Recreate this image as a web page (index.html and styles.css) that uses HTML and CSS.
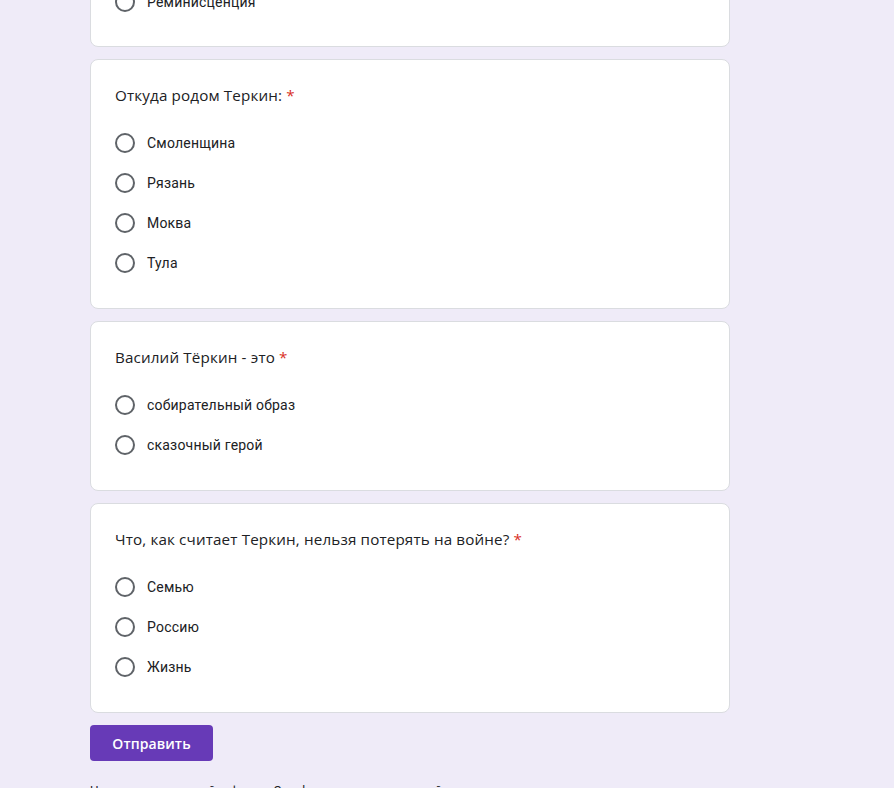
FILE: index.html
```html
<!DOCTYPE html>
<html lang="ru">
<head>
<meta charset="utf-8">
<title>Форма</title>
<link rel="stylesheet" href="styles.css">
</head>
<body>
<main class="form">
  <section class="card card-cut">
    <div class="options">
      <label class="option"><span class="radio"></span><span class="opt-text">Реминисценция</span></label>
    </div>
  </section>

  <section class="card">
    <div class="title">Откуда родом Теркин: <span class="req">*</span></div>
    <div class="options">
      <label class="option"><span class="radio"></span><span class="opt-text">Смоленщина</span></label>
      <label class="option"><span class="radio"></span><span class="opt-text">Рязань</span></label>
      <label class="option"><span class="radio"></span><span class="opt-text">Моква</span></label>
      <label class="option"><span class="radio"></span><span class="opt-text">Тула</span></label>
    </div>
  </section>

  <section class="card">
    <div class="title">Василий Тёркин - это <span class="req">*</span></div>
    <div class="options">
      <label class="option"><span class="radio"></span><span class="opt-text">собирательный образ</span></label>
      <label class="option"><span class="radio"></span><span class="opt-text">сказочный герой</span></label>
    </div>
  </section>

  <section class="card">
    <div class="title">Что, как считает Теркин, нельзя потерять на войне? <span class="req">*</span></div>
    <div class="options">
      <label class="option"><span class="radio"></span><span class="opt-text">Семью</span></label>
      <label class="option"><span class="radio"></span><span class="opt-text">Россию</span></label>
      <label class="option"><span class="radio"></span><span class="opt-text">Жизнь</span></label>
    </div>
  </section>

  <div class="actions">
    <button class="submit" type="button">Отправить</button>
  </div>

  <p class="footer">Никогда не используйте формы Google для передачи паролей.</p>
</main>
</body>
</html>
```

FILE: styles.css
```css
html, body {
  margin: 0;
  padding: 0;
  background: #efebf8;
}

body {
  font-family: Roboto, "Noto Sans", Arial, sans-serif;
  color: #202124;
  overflow: hidden;
}

.form {
  width: 640px;
  margin: -43px 0 0 90px;
  display: flex;
  flex-direction: column;
  gap: 12px;
}

.card {
  background: #fff;
  border: 1px solid #dadce0;
  border-radius: 8px;
  padding: 23px 24px 25px;
  display: flex;
  flex-direction: column;
  gap: 16px;
}

.card-cut {
  padding: 24px;
}

.title {
  font-family: "Open Sans", Roboto, Arial, sans-serif;
  font-size: 15.2px;
  line-height: 24px;
  letter-spacing: 0.15px;
  color: #202124;
}

.req {
  color: #d93025;
}

.options {
  display: flex;
  flex-direction: column;
}

.option {
  display: flex;
  align-items: center;
  gap: 12px;
  height: 40px;
}

.radio {
  box-sizing: border-box;
  width: 20px;
  height: 20px;
  border: 2px solid #5f6368;
  border-radius: 50%;
  flex: none;
}

.opt-text {
  font-size: 14px;
  letter-spacing: 0.2px;
  line-height: 20px;
  color: #202124;
}

.actions {
  display: flex;
}

.submit {
  font-family: "Open Sans", Roboto, Arial, sans-serif;
  font-weight: 600;
  font-size: 14px;
  letter-spacing: 0.1px;
  color: #fff;
  background: #673ab7;
  border: none;
  border-radius: 4px;
  width: 123px;
  height: 36px;
  padding: 0;
}

.footer {
  margin: 10px 0 0;
  font-size: 12px;
  line-height: 16px;
  color: #202124;
}
```
